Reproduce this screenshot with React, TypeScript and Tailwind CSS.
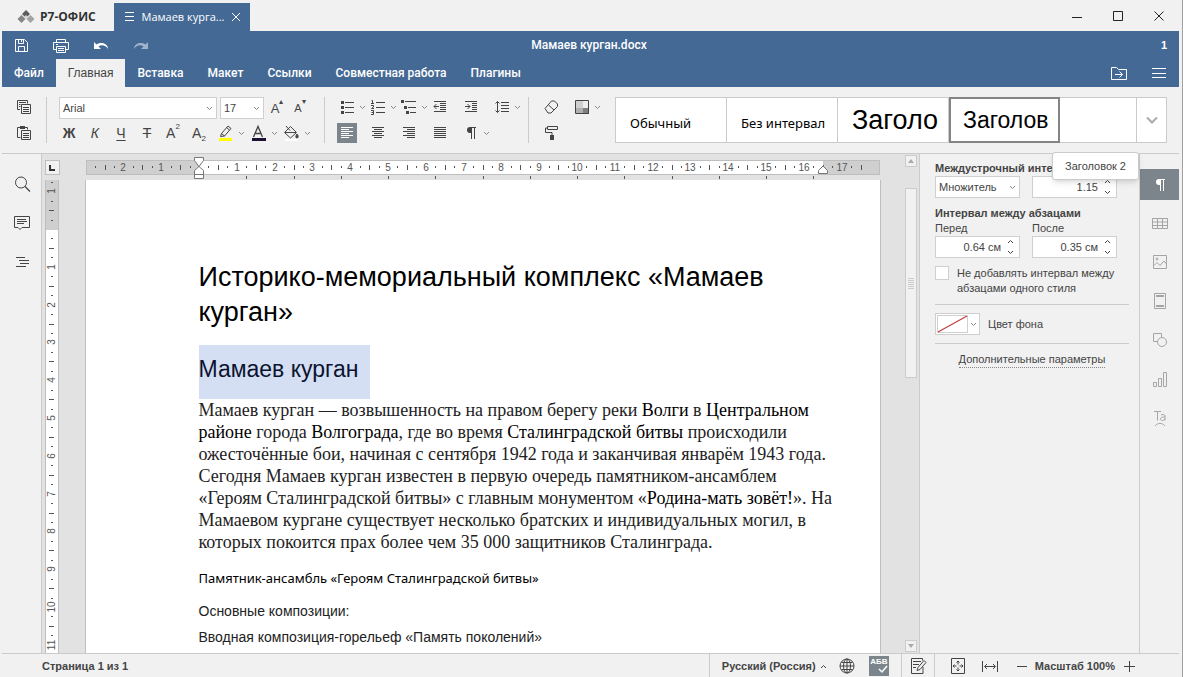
import type { ReactNode } from "react";
import clsx from "clsx";

const CM = 37.8;

type IconProps = { children: ReactNode; className?: string; size?: number };

const Icon = ({ children, className, size = 20 }: IconProps) => (
  <svg
    width={size}
    height={size}
    viewBox={`0 0 ${size} ${size}`}
    fill="none"
    stroke="currentColor"
    aria-hidden="true"
    className={clsx("shrink-0", className)}
  >
    {children}
  </svg>
);

const Chevron = ({ up = false }: { up?: boolean }) => (
  <svg width="7" height="5" viewBox="0 0 7 5" fill="none" stroke="currentColor" aria-hidden="true" className="shrink-0">
    <path d={up ? "M1 4L3.5 1.5 6 4" : "M1 1L3.5 3.5 6 1"} />
  </svg>
);

const SaveIcon = () => (
  <Icon>
    <path d="M4.5 4.5h9l3 3v9h-12zM7.5 4.5v4h5v-4M10.500 5v2M7.500 16.500v-5h6v5" />
  </Icon>
);

const PrintIcon = () => (
  <Icon>
    <path d="M5.500 7.500v-3h9v3M5.500 14.500h-3v-7h15v7h-3M5.500 11.500h9v6h-9zM7 13.500h6M7 15.500h6M5 9.500h2" />
  </Icon>
);

const UndoIcon = () => (
  <Icon>
    <path d="M3 7v7h7l-2.500-2.500c3-2 7-1.500 9.500 2.500 0-5-6-8-11.500-4.500z" fill="currentColor" stroke="none" />
  </Icon>
);

const RedoIcon = () => (
  <Icon>
    <path d="M17 7v7h-7l2.500-2.500c-3-2-7-1.500-9.500 2.500 0-5 6-8 11.500-4.500z" fill="currentColor" stroke="none" />
  </Icon>
);

const FolderIcon = () => (
  <Icon>
    <path d="M2.500 16.500v-12h5l2 2h8v10zM6 11.500h7M10.500 8.500l3 3-3 3" />
  </Icon>
);

const BurgerIcon = () => (
  <Icon>
    <path d="M3 5.500h14M3 10.500h14M3 14.500h14" />
  </Icon>
);

const CopyIcon = () => (
  <Icon>
    <path d="M6 12.500H3.500v-9h10v3M5 5.500h7M5 7.500h1.500M5 9.500h1.500M7.500 7.500h9v9h-9zM9 10.500h6M9 12.500h6M9 14.500h6" />
  </Icon>
);

const PasteIcon = () => (
  <Icon>
    <path d="M6.500 14.500h-3v-10h10v2M7.500 7.500h9v9h-9zM9 10.500h6M9 12.500h6M9 14.500h6" />
    <path d="M6 3h5v3H6z" fill="currentColor" stroke="none" />
  </Icon>
);

const PenIcon = () => (
  <Icon>
    <path d="M5.500 13.500l1-3 6.500-7.500 3 2.500-6.500 7.500zM11.500 4.500l3 2.500M6.500 10.500l3 2.500" />
    <path d="M4 15h13v3H4z" fill="#ffff00" stroke="none" />
  </Icon>
);

const FontColorIcon = () => (
  <Icon>
    <path d="M5.500 14l4.500-10.500 4.500 10.500M7 10.500h6" strokeWidth="1.300" />
    <path d="M4 15h14v3H4z" fill="#1c1033" stroke="none" />
  </Icon>
);

const FillIcon = () => (
  <Icon>
    <path d="M3.500 9.500l6-6 6 6-6 5.500zM4 9.500h11M5 3l4 4.500" />
    <path d="M16 11c2 2.500 1 4 0 4s-2-1.500 0-4z" fill="currentColor" />
    <path d="M4 16h13v2H4z" fill="#fff" stroke="none" />
  </Icon>
);

const BulletsIcon = () => (
  <Icon>
    <path d="M8 5.500h9M8 10.500h9M8 15.500h9" />
    <path d="M4 4h3v3H4zM4 9h3v3H4zM4 14h3v3H4z" fill="currentColor" stroke="none" />
  </Icon>
);

const NumbersIcon = () => (
  <Icon>
    <path d="M8 5.500h9M8 10.500h9M8 15.500h9M3.500 3.500h1v3M3 6.500h3M3 8.500h2.500v1.500L3.500 11.500H6M3 13.500h2.500v4H3M3.500 15.500h2" />
  </Icon>
);

const MultilevelIcon = () => (
  <Icon>
    <path d="M6 4.500h11M9 10.500h8M11 15.500h6" />
    <path d="M2 3h3v3H2zM5 9h3v3H5zM7 14h3v3H7z" fill="currentColor" stroke="none" />
  </Icon>
);

const OutdentIcon = () => (
  <Icon>
    <path d="M4 4.500h12M10 6.500h6M10 8.500h6M10 10.500h6M10 12.500h6M4 14.500h12M9 9.500H4M6.500 7l-2.500 2.500 2.500 2.500" />
  </Icon>
);

const IndentIcon = () => (
  <Icon>
    <path d="M4 4.500h12M11 6.500h5M11 8.500h5M11 10.500h5M11 12.500h5M4 14.500h12M4 9.500h5M6.500 7l2.500 2.500-2.500 2.500" />
  </Icon>
);

const SpacingIcon = () => (
  <Icon>
    <path d="M9 5.500h8M9 8.500h8M9 11.500h8M9 14.500h8M5.500 4.500v11M3.500 6.500l2-2 2 2M3.500 13.500l2 2 2-2" />
  </Icon>
);

const AlignIcon = ({ kind }: { kind: "left" | "center" | "right" | "justify" }) => {
  const paths = {
    left: "M4 4.500h12M4 6.500h8M4 8.500h12M4 10.500h8M4 12.500h12M4 14.500h8",
    center: "M4 4.500h12M6 6.500h8M4 8.500h12M6 10.500h8M4 12.500h12M6 14.500h8",
    right: "M4 4.500h12M8 6.500h8M4 8.500h12M8 10.500h8M4 12.500h12M8 14.500h8",
    justify: "M4 4.500h12M4 6.500h12M4 8.500h12M4 10.500h12M4 12.500h12M4 14.500h12",
  };
  return (
    <Icon>
      <path d={paths[kind]} />
    </Icon>
  );
};

const PilcrowIcon = () => (
  <Icon>
    <path d="M9 4h6v1h-1v11h-1V5h-2v11h-1v-6H9a3 3 0 0 1 0-6z" fill="currentColor" stroke="none" />
  </Icon>
);

const EraserIcon = () => (
  <Icon>
    <path d="M4 11.500l6.500-7.500h3l3 3v2.500l-6.500 6.500H7zM7.500 8l5.500 5" />
  </Icon>
);

const RollerIcon = () => (
  <Icon>
    <path d="M6.500 3.500h10v3h-10zM6.500 5H4.500v4.500h6.500V12" />
    <path d="M9 12h4v5H9z" fill="currentColor" stroke="none" />
  </Icon>
);

const SchemeIcon = () => (
  <Icon>
    <path d="M4 4h7v7H4z" fill="#cfcfcf" stroke="none" />
    <path d="M11 4h6v7h-6z" fill="#ededed" stroke="none" />
    <path d="M4 11h7v6H4z" fill="#b0b0b0" stroke="none" />
    <path d="M11 11h6v6h-6z" fill="#808080" stroke="none" />
    <path d="M3.500 3.500h13v13h-13z" />
  </Icon>
);

const SearchIcon = () => (
  <Icon>
    <circle cx="9" cy="8.500" r="5.500" />
    <path d="M13 12.500l5 5" strokeWidth="1.300" />
  </Icon>
);

const CommentIcon = () => (
  <Icon>
    <path d="M2.500 3.500h15v11H10l-2 2-2-2H2.500zM5 6.500h9M5 8.500h10M5 10.500h7" />
  </Icon>
);

const NavigationIcon = () => (
  <Icon>
    <path d="M4 5.500h9M7 8.500h10M8 11.500h9M4 14.500h10" />
  </Icon>
);

const TableIcon = () => (
  <Icon>
    <path d="M2.500 4.500h15v10h-15zM2.500 8h15M2.500 11.500h15M7.500 4.500v10M12.500 4.500v10" />
  </Icon>
);

const ImageIcon = () => (
  <Icon>
    <path d="M3.500 2.500h13v13h-13zM4 12.500l3-3 3 3 4-4.500 2.500 3" />
    <circle cx="7" cy="6" r="1" />
  </Icon>
);

const HeaderFooterIcon = () => (
  <Icon>
    <path d="M4.500 1.500h11v15h-11z" />
    <path d="M6 4h8M6 14h8" strokeWidth="2" />
  </Icon>
);

const ShapeIcon = () => (
  <Icon>
    <path d="M8 10.500H3.500v-8h8V6" />
    <circle cx="12" cy="11" r="4.500" />
  </Icon>
);

const ChartIcon = () => (
  <Icon>
    <path d="M3.500 12.500h3v4h-3zM8.500 8.500h3v8h-3zM13.500 2.500h3v14h-3z" />
  </Icon>
);

const TextArtIcon = () => (
  <Icon>
    <path d="M4 2.500h7M7.500 2.500v9M11 6c1-.700 4-1 4 1v4.500M15 8c-4 0-5 1-4.500 2.500s3.500 1.200 4.500-.5M5 17c3-3.500 7-3.500 10 0" />
  </Icon>
);

const GlobeIcon = () => (
  <Icon>
    <circle cx="10" cy="10" r="7" />
    <ellipse cx="10" cy="10" rx="3.500" ry="7" />
    <path d="M10 3v14M3 10h14M4.500 6.500h11M4.500 13.500h11" />
  </Icon>
);

const TrackIcon = () => (
  <Icon>
    <path d="M15 11v6.500H3.500v-15h11v2M5 5.500h8M5 8.500h6M5 11.500h3M9 14.500l1-3 6-7 2 2-6 7z" />
  </Icon>
);

const FitPageIcon = () => (
  <Icon>
    <path d="M3.500 2.500h13v15h-13zM10 5v3.500M10 15v-3.500M5 10h3.500M15 10h-3.500M8.500 6.500L10 5l1.500 1.500M8.500 13.500L10 15l1.500-1.500M6.500 8.500L5 10l1.500 1.500M13.500 8.500L15 10l-1.500 1.500" />
  </Icon>
);

const FitWidthIcon = () => (
  <Icon>
    <path d="M2.500 5v11M17.500 5v11M5 10.500h10M7 8l-2.500 2.500L7 13M13 8l2.500 2.500L13 13" />
  </Icon>
);

const IconButton = ({ label, children, className }: { label: string; children: ReactNode; className?: string }) => (
  <button
    type="button"
    aria-label={label}
    className={clsx("flex size-5 shrink-0 items-center justify-center leading-none", className)}
  >
    {children}
  </button>
);

// Icon with a drop-down arrow next to it
const SplitButton = ({ label, children, wide }: { label: string; children: ReactNode; wide?: boolean }) => (
  <div className={clsx("flex shrink-0 items-center", wide ? "w-[33px]" : "w-[31px]")}>
    <IconButton label={label}>{children}</IconButton>
    <button type="button" aria-label={`${label}: меню`} className="flex h-5 w-3 items-center justify-center text-[#888]">
      <Chevron />
    </button>
  </div>
);

const Separator = () => <div className="h-[46px] w-px shrink-0 bg-[#cbcbcb]" />;

const Select = ({ label, value, className }: { label: string; value: string; className: string }) => (
  <div className={clsx("relative shrink-0", className)}>
    <select
      aria-label={label}
      defaultValue={value}
      className="block h-[22px] w-full appearance-none border border-[#cfcfcf] bg-white pr-4 pl-[3px] text-[11px] text-[#444]"
    >
      <option>{value}</option>
    </select>
    <span className="pointer-events-none absolute inset-y-0 right-1 flex items-center text-[#888]">
      <Chevron />
    </span>
  </div>
);

const Spinner = ({ id, label, value }: { id: string; label?: string; value: string }) => (
  <div className="flex h-[22px] w-[85px] border border-[#cfcfcf] bg-white">
    <input id={id} aria-label={label} defaultValue={value} className="w-[65px] min-w-0 text-right text-[11px] text-[#444]" />
    <div className="flex flex-1 flex-col items-center justify-between py-[2px] text-[#444]">
      <button type="button" aria-label="Увеличить" className="flex"><Chevron up /></button>
      <button type="button" aria-label="Уменьшить" className="flex"><Chevron /></button>
    </div>
  </div>
);

const TitleBar = () => (
  <header className="flex h-[31px] items-end">
    <div className="flex h-full w-28 items-center gap-[5px] pt-[2px] pl-[15px] text-[#333]">
      <svg width="18" height="14" viewBox="0 0 18 14" aria-hidden="true">
        <path d="M9 0l4 4-4 4-4-4z" fill="#5c5c5c" />
        <path d="M4.500 5l4 4-4 4-4-4z" fill="#858585" />
        <path d="M13.500 5l4 4-4 4-4-4z" fill="#a3a3a3" />
        <path d="M9 5l2 2-2 2.500L7 7z" fill="#d5d5d5" />
      </svg>
      <span className="font-['Open_Sans',sans-serif] text-[12px] leading-[18px] font-bold">Р7-ОФИС</span>
    </div>
    <div className="flex h-7 w-[136px] items-center justify-between bg-[#446995] px-[9px] text-white">
      <Icon size={12}>
        <path d="M2 1.500h9M2 5.500h9M2 9.500h9" />
      </Icon>
      <span className="font-['Open_Sans',sans-serif] text-[11px]">Мамаев курга...</span>
      <button type="button" aria-label="Закрыть вкладку">
        <Icon size={10}>
          <path d="M1 1l8 8M9 1L1 9" />
        </Icon>
      </button>
    </div>
    <div className="ml-auto flex h-full items-center gap-[21px] pr-[10px] text-[#222]">
      <IconButton label="Свернуть"><Icon><path d="M5 11.500h10" /></Icon></IconButton>
      <IconButton label="Развернуть"><Icon><path d="M5.500 5.500h9v9h-9z" /></Icon></IconButton>
      <IconButton label="Закрыть"><Icon><path d="M5.500 5.500l9 9M14.500 5.500l-9 9" /></Icon></IconButton>
    </div>
  </header>
);

const tabs = ["Файл", "Главная", "Вставка", "Макет", "Ссылки", "Совместная работа", "Плагины"];

const MainMenu = () => (
  <div className="bg-[#446995] text-white">
    <div className="flex h-7 items-center">
      <div className="flex flex-1 items-center gap-5 pl-[9px]">
        <IconButton label="Сохранить"><SaveIcon /></IconButton>
        <IconButton label="Печать"><PrintIcon /></IconButton>
        <IconButton label="Отменить"><UndoIcon /></IconButton>
        <IconButton label="Повторить" className="text-[#9fb3cb]"><RedoIcon /></IconButton>
      </div>
      <h1 className="font-['Roboto',sans-serif] text-[12px] font-medium text-white">Мамаев курган.docx</h1>
      <div className="flex-1 pr-3 text-right text-[11px] font-bold">1</div>
    </div>
    <nav className="flex h-7 items-stretch">
      {tabs.map((tab) => (
        <button
          key={tab}
          type="button"
          className={clsx(
            "px-3 text-[12px] whitespace-nowrap",
            tab === "Главная" ? "bg-[#f1f1f1] text-[#444]" : "font-['Roboto',sans-serif] font-medium text-white"
          )}
        >
          {tab}
        </button>
      ))}
      <div className="ml-auto flex items-center gap-5 pr-[10px]">
        <IconButton label="Открыть расположение файла"><FolderIcon /></IconButton>
        <IconButton label="Параметры представления"><BurgerIcon /></IconButton>
      </div>
    </nav>
  </div>
);

const styleCell = "flex h-full shrink-0 items-center overflow-hidden border-r border-[#cbcbcb] pl-[14px] text-black";

const StyleGallery = () => (
  <div className="ml-[13px] flex h-[46px] min-w-0 flex-1 border border-[#cbcbcb] bg-white">
    <button type="button" className={clsx(styleCell, "w-[111px]")}>
      <span className="pt-2 font-['Noto_Sans',sans-serif] text-[13px] whitespace-nowrap">Обычный</span>
    </button>
    <button type="button" className={clsx(styleCell, "w-[111px]")}>
      <span className="pt-2 font-['Noto_Sans',sans-serif] text-[13px] whitespace-nowrap">Без интервал</span>
    </button>
    <button type="button" className={clsx(styleCell, "w-[111px]")}>
      <span className="text-[27px] whitespace-nowrap">Заголо</span>
    </button>
    <button
      type="button"
      className="-my-px flex w-[111px] shrink-0 items-center overflow-hidden border-2 border-[#848484] pl-3 text-black"
    >
      <span className="text-[23px] whitespace-nowrap">Заголов</span>
    </button>
    <div className="flex-1" />
    <button type="button" aria-label="Все стили" className="flex w-[30px] items-center justify-center border-l border-[#cbcbcb] text-[#aaa]">
      <Icon size={12}><path d="M1 3.500l5 5 5-5" strokeWidth="2" /></Icon>
    </button>
  </div>
);

const Toolbar = () => (
  <div className="flex h-[67px] items-start border-b border-[#cbcbcb] pt-[10px] pr-3 text-[#444]">
    <div className="flex w-11 flex-col items-center gap-[6px]">
      <IconButton label="Копировать"><CopyIcon /></IconButton>
      <IconButton label="Вставить"><PasteIcon /></IconButton>
    </div>
    <Separator />
    <div className="ml-3 flex w-[265px] flex-col gap-1">
      <div className="flex h-[22px] items-center gap-[3px]">
        <Select label="Шрифт" value="Arial" className="w-[158px]" />
        <Select label="Размер шрифта" value="17" className="w-11" />
        <IconButton label="Увеличить размер шрифта" className="text-[13px]">
          A<span className="self-start text-[8px]">▴</span>
        </IconButton>
        <IconButton label="Уменьшить размер шрифта" className="text-[11px]">
          A<span className="self-start text-[8px]">▾</span>
        </IconButton>
      </div>
      <div className="flex items-center">
        <div className="flex w-[156px] gap-[6px] text-[14px]">
          <IconButton label="Полужирный" className="font-bold">Ж</IconButton>
          <IconButton label="Курсив" className="italic">К</IconButton>
          <IconButton label="Подчеркнутый" className="underline underline-offset-2">Ч</IconButton>
          <IconButton label="Зачеркнутый" className="line-through">Т</IconButton>
          <IconButton label="Надстрочные знаки">A<span className="self-start text-[8px]">2</span></IconButton>
          <IconButton label="Подстрочные знаки">A<span className="self-end text-[8px]">2</span></IconButton>
        </div>
        <SplitButton label="Цвет выделения" wide><PenIcon /></SplitButton>
        <SplitButton label="Цвет шрифта" wide><FontColorIcon /></SplitButton>
        <SplitButton label="Заливка" wide><FillIcon /></SplitButton>
      </div>
    </div>
    <Separator />
    <div className="ml-3 flex w-[191px] flex-col gap-[6px]">
      <div className="flex items-center">
        <SplitButton label="Маркированный список"><BulletsIcon /></SplitButton>
        <SplitButton label="Нумерованный список"><NumbersIcon /></SplitButton>
        <SplitButton label="Многоуровневый список"><MultilevelIcon /></SplitButton>
        <IconButton label="Уменьшить отступ" className="mr-[11px]"><OutdentIcon /></IconButton>
        <IconButton label="Увеличить отступ" className="mr-[11px]"><IndentIcon /></IconButton>
        <SplitButton label="Междустрочный интервал"><SpacingIcon /></SplitButton>
      </div>
      <div className="flex items-center gap-[11px]">
        <IconButton label="По левому краю" className="bg-[#7d858c] text-white"><AlignIcon kind="left" /></IconButton>
        <IconButton label="По центру"><AlignIcon kind="center" /></IconButton>
        <IconButton label="По правому краю"><AlignIcon kind="right" /></IconButton>
        <IconButton label="По ширине"><AlignIcon kind="justify" /></IconButton>
        <SplitButton label="Непечатаемые символы"><PilcrowIcon /></SplitButton>
      </div>
    </div>
    <Separator />
    <div className="ml-3 flex w-[61px] shrink-0 flex-col gap-[6px]">
      <div className="flex gap-[11px]">
        <IconButton label="Очистить стиль"><EraserIcon /></IconButton>
        <SplitButton label="Цветовая схема"><SchemeIcon /></SplitButton>
      </div>
      <IconButton label="Копировать стиль"><RollerIcon /></IconButton>
    </div>
    <StyleGallery />
  </div>
);

const range = (from: number, to: number) => {
  const result: number[] = [];
  for (let n = from; n <= to; n++) result.push(n);
  return result;
};

const HorizontalRuler = () => (
  <svg width="794" height="26" viewBox="0 0 794 26" className="shrink-0" aria-hidden="true">
    <rect x="0.5" y="6.500" width="793" height="14" fill="#cfcfcf" stroke="#bebebe" />
    <rect x="113" y="7" width="624" height="13" fill="#fff" />
    {range(-11, 70).map((q) => {
      const x = Math.round(113 + (q * CM) / 4);
      if (q === 0) return null;
      if (q % 4 === 0) {
        return (
          <text key={q} x={x} y="17" textAnchor="middle" fontSize="10" fill="#555">
            {Math.abs(q / 4)}
          </text>
        );
      }
      const half = q % 2 === 0;
      return <rect key={q} x={x} y={half ? 11 : 12} width="1" height={half ? 5 : 2} fill="#555" />;
    })}
    {range(1, 13).map((n) => (
      <rect key={n} x={Math.round(113 + n * 1.25 * CM)} y="22" width="1" height="3" fill="#555" />
    ))}
    <path d="M108.500 3.500h9v3L113 12.500l-4.500-6zM108.500 20.500v-4L113 12.500l4.500 4v4zM108.500 20.500h9v4h-9z" fill="#fff" stroke="#777" />
    <path d="M732.500 19.500v-3l4.500-4.500 4.500 4.500v3z" fill="#fff" stroke="#777" />
  </svg>
);

const VerticalRuler = () => (
  <svg width="14" height="900" viewBox="0 0 14 900" className="block" aria-hidden="true">
    <rect width="14" height="900" fill="#bebebe" />
    <rect x="1" width="12" height="50" fill="#cfcfcf" />
    <rect x="1" y="50" width="12" height="850" fill="#fff" />
    {range(-5, 88).map((q) => {
      const y = Math.round(49 + (q * CM) / 4);
      if (q === 0) return null;
      if (q % 4 === 0) {
        return (
          <text key={q} transform={`translate(10 ${y}) rotate(-90)`} textAnchor="middle" fontSize="10" fill="#555">
            {Math.abs(q / 4)}
          </text>
        );
      }
      const half = q % 2 === 0;
      return <rect key={q} x={half ? 4 : 6} y={y} width={half ? 5 : 2} height="1" fill="#555" />;
    })}
  </svg>
);

const Link = ({ children }: { children: ReactNode }) => (
  <a href="#" className="text-black">{children}</a>
);

const DocumentPage = () => (
  <article className="h-[1123px] w-[796px] shrink-0 border-x border-[#bebebe] bg-white pt-20 pl-[113px] whitespace-nowrap text-[#222]">
    <h2 className="text-[27px] leading-[35px] text-black">
      Историко-мемориальный комплекс «Мамаев
      <br />
      курган»
    </h2>
    <h3 className="mt-[15px] h-[54px] w-fit bg-[#d5dff3] pr-3 text-[23px] leading-[48px] text-[#0b1430]">
      Мамаев курган
    </h3>
    <p className="font-['Liberation_Serif',serif] text-[18px] leading-[22px]">
      Мамаев курган — возвышенность на правом берегу реки <Link>Волги</Link> в <Link>Центральном</Link>
      <br />
      <Link>районе</Link> города <Link>Волгограда</Link>, где во время <Link>Сталинградской битвы</Link> происходили
      <br />
      ожесточённые бои, начиная с сентября 1942 года и заканчивая январём 1943 года.
      <br />
      Сегодня Мамаев курган известен в первую очередь памятником-ансамблем
      <br />
      «Героям Сталинградской битвы» с главным монументом «<Link>Родина-мать зовёт!</Link>». На
      <br />
      Мамаевом кургане существует несколько братских и индивидуальных могил, в
      <br />
      которых покоится прах более чем 35 000 защитников Сталинграда.
    </p>
    <p className="mt-[14px] font-['Noto_Sans',sans-serif] text-[13px] leading-[22px] text-black">
      Памятник-ансамбль «Героям Сталинградской битвы»
    </p>
    <p className="mt-[9px] text-[14px] leading-[26px]">
      Основные композиции:
      <br />
      Вводная композиция-горельеф «Память поколений»
    </p>
  </article>
);

const Editor = () => (
  <main className="flex min-w-0 flex-1 bg-[#e2e2e2]">
    <div className="flex flex-col overflow-hidden pl-[3px]">
      <button type="button" aria-label="Тип табуляции" className="mt-[6px] mb-[5px] flex size-[15px] shrink-0 items-center justify-center border border-[#bebebe] bg-[#f1f1f1]">
        <svg width="7" height="7" viewBox="0 0 7 7" aria-hidden="true">
          <path d="M1 1v5h5" fill="none" stroke="#333" strokeWidth="2" />
        </svg>
      </button>
      <div className="min-h-0 flex-1 overflow-hidden">
        <VerticalRuler />
      </div>
    </div>
    <div className="flex min-w-0 flex-1 flex-col items-center overflow-hidden">
      <HorizontalRuler />
      <div className="flex min-h-0 flex-1 justify-center overflow-hidden">
        <DocumentPage />
      </div>
    </div>
    <div className="flex w-[14px] flex-col py-px pr-[2px] text-[#aaa]">
      <button type="button" aria-label="Вверх" className="flex h-3 items-center justify-center border border-[#cbcbcb] bg-[#f1f1f1]">
        <svg width="6" height="4" viewBox="0 0 6 4" aria-hidden="true"><path d="M0 4l3-4 3 4z" fill="currentColor" /></svg>
      </button>
      <div className="mt-[21px] h-[190px] border border-[#cbcbcb] bg-[#f1f1f1] pt-[89px]">
        <div className="mx-auto h-[11px] w-[6px] bg-[repeating-linear-gradient(#cbcbcb_0_1px,transparent_1px_2px)]" />
      </div>
      <button type="button" aria-label="Вниз" className="mt-auto flex h-3 items-center justify-center border border-[#cbcbcb] bg-[#f1f1f1]">
        <svg width="6" height="4" viewBox="0 0 6 4" aria-hidden="true"><path d="M0 0l3 4 3-4z" fill="currentColor" /></svg>
      </button>
    </div>
  </main>
);

const ParagraphPanel = () => (
  <aside className="relative w-[220px] shrink-0 border-l border-[#cbcbcb] pt-[7px] pr-[10px] pl-[15px] text-[11px] leading-[15px] text-[#444]">
    <div className="truncate font-bold">Междустрочный интервал</div>
    <div className="flex gap-3">
      <Select label="Тип интервала" value="Множитель" className="w-[85px]" />
      <Spinner id="line-spacing" label="Значение интервала" value="1.15" />
    </div>
    <div className="mt-2 font-bold">Интервал между абзацами</div>
    <div className="flex gap-3">
      <div>
        <label htmlFor="before" className="block">Перед</label>
        <Spinner id="before" value="0.64 см" />
      </div>
      <div>
        <label htmlFor="after" className="block">После</label>
        <Spinner id="after" value="0.35 см" />
      </div>
    </div>
    <label className="mt-2 flex items-start gap-2">
      <input type="checkbox" className="size-[14px] shrink-0 appearance-none border border-[#cfcfcf] bg-white" />
      <span>
        Не добавлять интервал между
        <br />
        абзацами одного стиля
      </span>
    </label>
    <div className="mt-2 border-t border-[#cbcbcb]" />
    <div className="mt-2 flex items-center gap-2">
      <button type="button" aria-labelledby="back-color" className="flex h-[22px] w-[45px] items-center justify-between border border-[#cfcfcf] bg-white pr-[2px] pl-px text-[#888]">
        <svg width="31" height="18" viewBox="0 0 31 18" aria-hidden="true">
          <path d="M0.500 0.500h30v17h-30z" fill="#fff" stroke="#cfcfcf" />
          <path d="M1 17L30 1" stroke="#c43b3b" strokeWidth="1.200" />
        </svg>
        <Chevron />
      </button>
      <span id="back-color">Цвет фона</span>
    </div>
    <div className="mt-2 border-t border-[#cbcbcb]" />
    <div className="mt-2 text-center">
      <a href="#" className="inline-block border-b border-dotted border-[#888] whitespace-nowrap">Дополнительные параметры</a>
    </div>
    <div role="tooltip" className="absolute -top-[2px] right-0 flex h-7 items-center rounded-[3px] border border-[#cbcbcb] bg-white px-3 whitespace-nowrap shadow-md">
      Заголовок 2
    </div>
  </aside>
);

const rightTools = [
  { label: "Параметры таблицы", icon: <TableIcon /> },
  { label: "Параметры изображения", icon: <ImageIcon /> },
  { label: "Колонтитулы", icon: <HeaderFooterIcon /> },
  { label: "Параметры фигуры", icon: <ShapeIcon /> },
  { label: "Параметры диаграммы", icon: <ChartIcon /> },
  { label: "Параметры Text Art", icon: <TextArtIcon /> },
];

const StatusBar = () => (
  <footer className="flex h-6 shrink-0 items-center border-t border-[#cbcbcb] text-[11px] font-bold text-[#444]">
    <span className="pt-px pl-10">Страница 1 из 1</span>
    <div className="ml-auto flex h-full items-center border-l border-[#cbcbcb] pl-3">
      <button type="button" className="flex w-[115px] items-center gap-1 pt-px font-bold whitespace-nowrap">
        Русский (Россия) <Chevron up />
      </button>
      <IconButton label="Язык документа"><GlobeIcon /></IconButton>
      <button type="button" aria-label="Проверка орфографии" className="relative ml-3 flex size-5 justify-center bg-[#7d858c] text-[8px] leading-[11px] text-white">
        АБВ
        <Icon size={10} className="absolute right-[1px] bottom-[2px]"><path d="M1 5l3 3 5-6" strokeWidth="1.500" /></Icon>
      </button>
    </div>
    <div className="ml-3 flex h-full w-[34px] items-center justify-center border-x border-[#cbcbcb]">
      <IconButton label="Рецензирование"><TrackIcon /></IconButton>
    </div>
    <div className="flex items-center pr-10 pl-[13px]">
      <IconButton label="По размеру страницы"><FitPageIcon /></IconButton>
      <IconButton label="По ширине страницы" className="ml-3"><FitWidthIcon /></IconButton>
      <IconButton label="Уменьшить масштаб" className="ml-3"><Icon><path d="M5 10.500h10" /></Icon></IconButton>
      <span className="ml-[3px] pt-px whitespace-nowrap">Масштаб 100%</span>
      <IconButton label="Увеличить масштаб" className="ml-1"><Icon><path d="M5 10.500h11M10.500 5v11" /></Icon></IconButton>
    </div>
  </footer>
);

const App = () => (
  <div className="flex h-screen flex-col overflow-hidden border-r border-[#a0a0a0] bg-[#f1f1f1] pr-[3px] pl-[2px] font-['Liberation_Sans',Arial,sans-serif]">
    <TitleBar />
    <MainMenu />
    <Toolbar />
    <div className="flex min-h-0 flex-1">
      <div className="flex w-10 shrink-0 flex-col items-center gap-[19px] border-r border-[#cbcbcb] pt-5 text-[#444]">
        <IconButton label="Поиск"><SearchIcon /></IconButton>
        <IconButton label="Комментарии"><CommentIcon /></IconButton>
        <IconButton label="Навигация"><NavigationIcon /></IconButton>
      </div>
      <Editor />
      <ParagraphPanel />
      <div className="flex w-10 shrink-0 flex-col items-center gap-2 border-l border-[#cbcbcb] pt-[15px] text-[#a5a5a5]">
        <button type="button" aria-label="Параметры абзаца" className="flex h-[31px] w-full items-center justify-center bg-[#7d858c] text-white">
          <PilcrowIcon />
        </button>
        {rightTools.map((tool) => (
          <button key={tool.label} type="button" aria-label={tool.label} className="flex h-[31px] w-full items-center justify-center">
            {tool.icon}
          </button>
        ))}
      </div>
    </div>
    <StatusBar />
  </div>
);

export default App;
